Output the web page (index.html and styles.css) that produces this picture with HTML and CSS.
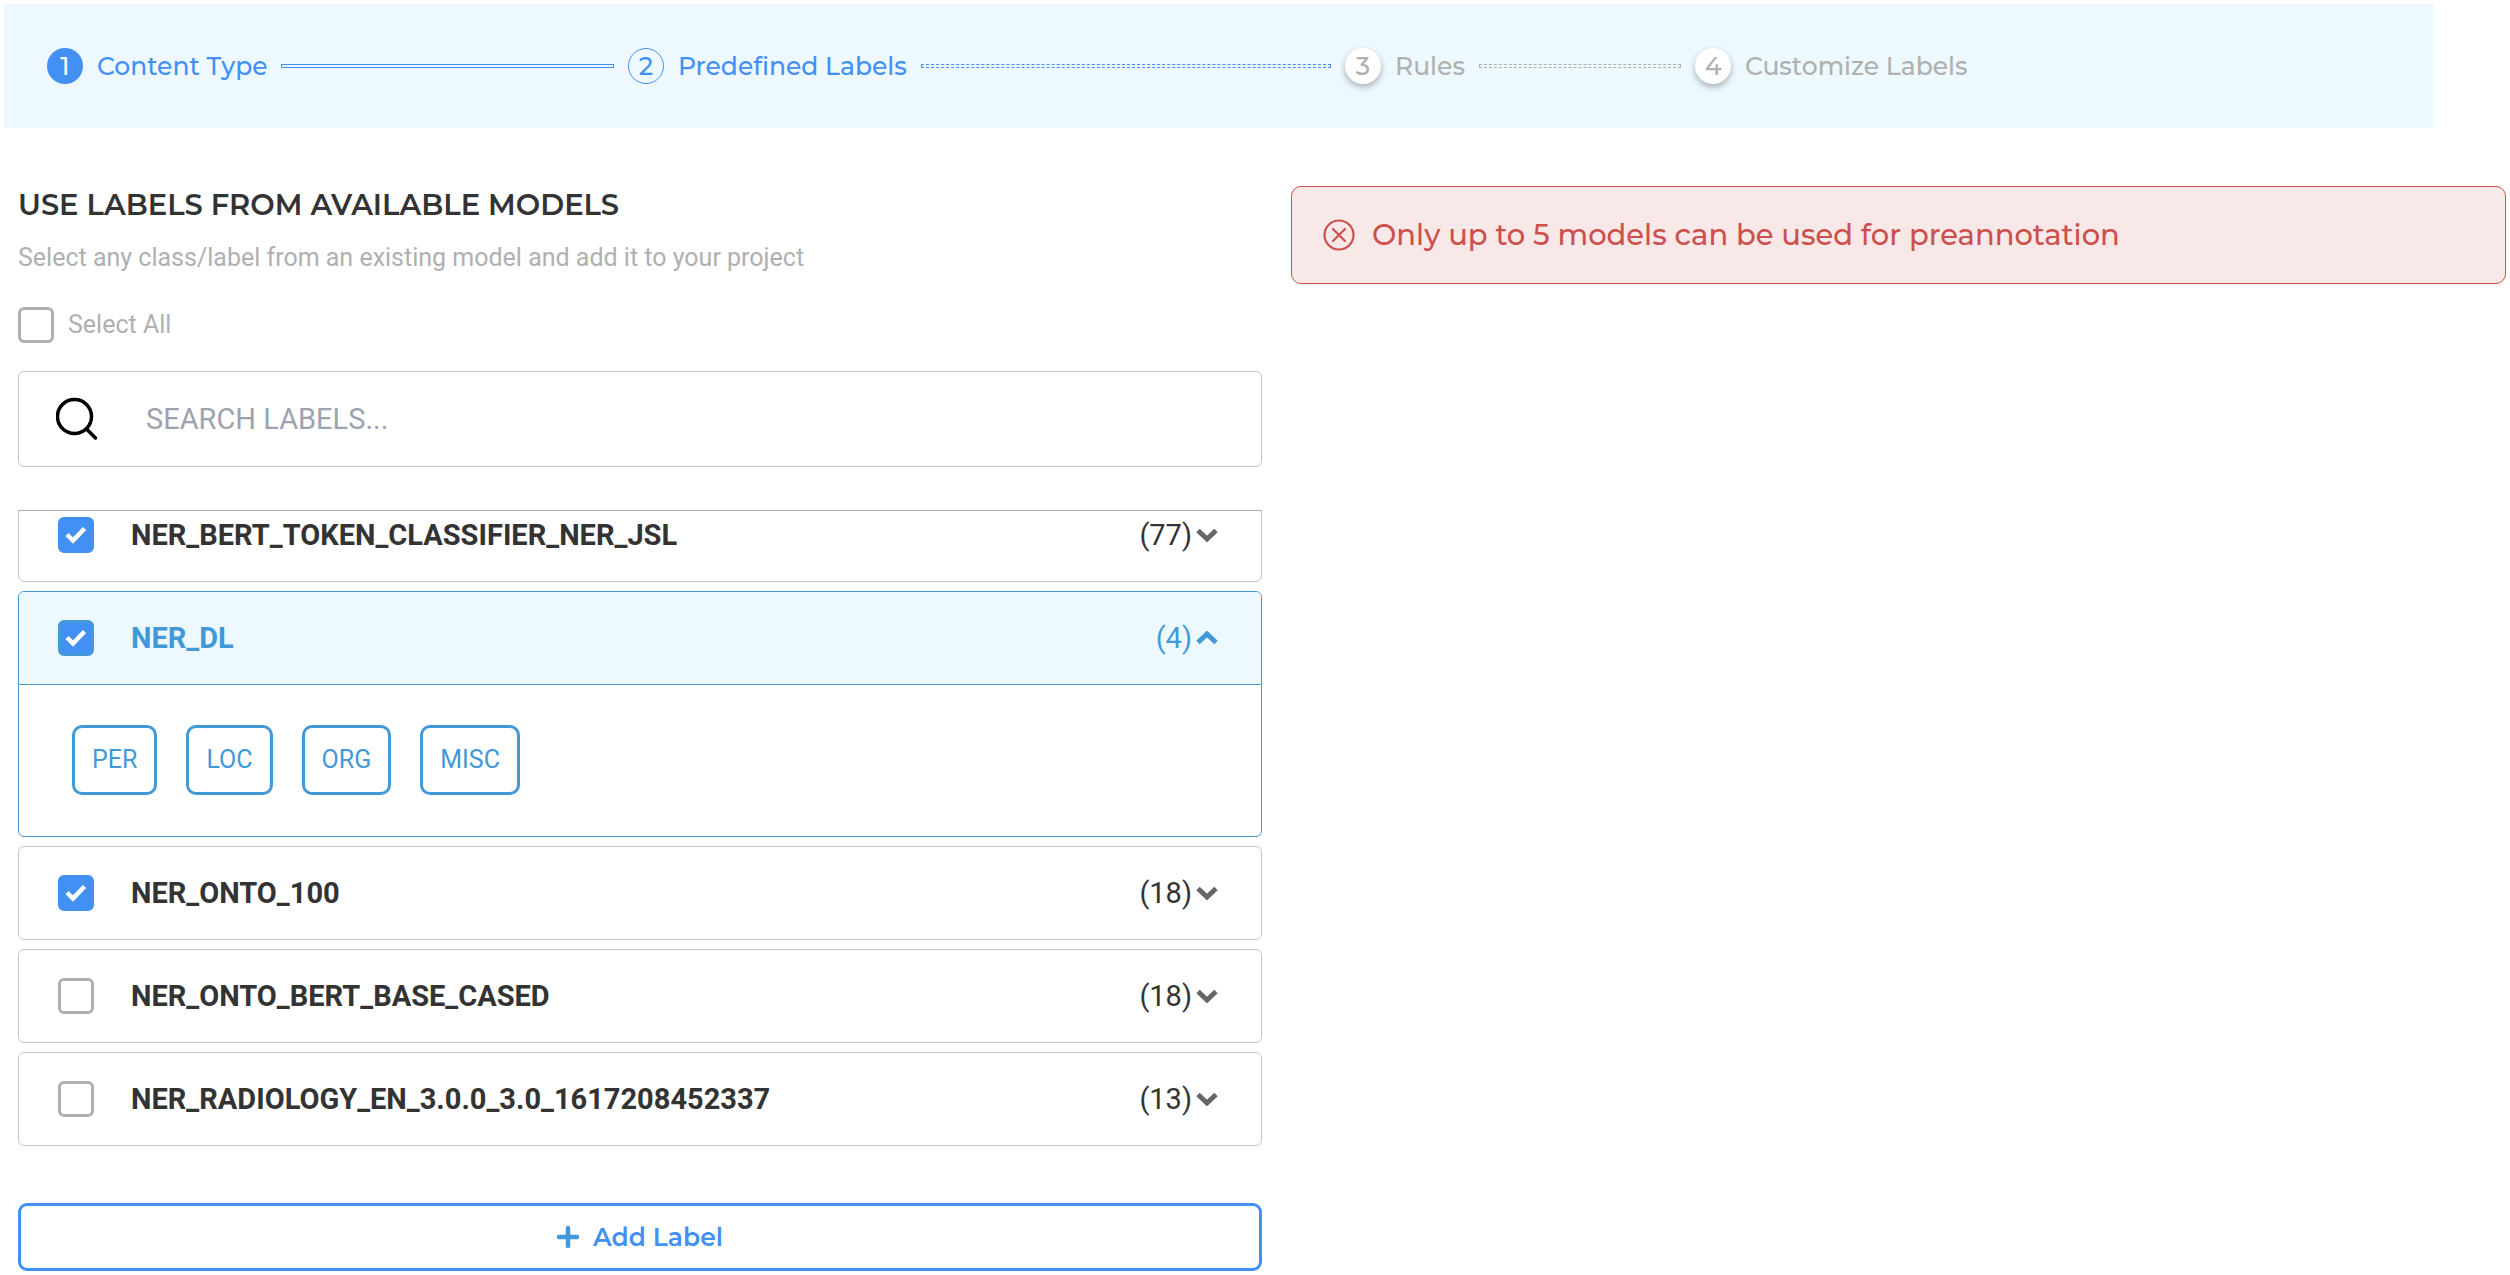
FILE: index.html
```html
<!DOCTYPE html>
<html lang="en">
<head>
<meta charset="utf-8">
<meta name="viewport" content="width=device-width, initial-scale=1">
<title>Predefined Labels</title>
<link rel="stylesheet" href="styles.css">
</head>
<body>
<svg class="sprite" aria-hidden="true">
  <symbol id="chevron" viewBox="0 0 22 14"><path d="M2 2.5 11 11 20 2.5" fill="none" stroke="currentColor" stroke-width="5"/></symbol>
</svg>

<nav aria-label="Setup steps">
  <ol class="steps">
    <li class="step step-done"><span class="step-number">1</span><span class="step-name">Content Type</span><span class="step-line"></span></li>
    <li class="step step-current" aria-current="step"><span class="step-number">2</span><span class="step-name">Predefined Labels</span><span class="step-line"></span></li>
    <li class="step"><span class="step-number">3</span><span class="step-name">Rules</span><span class="step-line"></span></li>
    <li class="step"><span class="step-number">4</span><span class="step-name">Customize Labels</span></li>
  </ol>
</nav>

<main class="content">
  <section class="picker">
    <h1 class="title">USE LABELS FROM AVAILABLE MODELS</h1>
    <p class="hint">Select any class/label from an existing model and add it to your project</p>
    <label class="select-all"><input class="check" type="checkbox">Select All</label>

    <div class="search">
      <svg class="search-icon" viewBox="0 0 42 44" aria-hidden="true"><circle cx="18.500" cy="19.500" r="17" fill="none" stroke="#000" stroke-width="3.500"/><path d="M30.500 32 39.500 41" fill="none" stroke="#000" stroke-width="3.500" stroke-linecap="round"/></svg>
      <input class="search-input" type="text" placeholder="SEARCH LABELS..." aria-label="Search labels">
    </div>

    <div class="models">
      <div class="model">
        <div class="model-head">
          <label class="model-name"><input class="check" type="checkbox" checked>NER_BERT_TOKEN_CLASSIFIER_NER_JSL</label>
          <button class="toggle" type="button">(77)<svg class="chevron" aria-hidden="true"><use href="#chevron"/></svg></button>
        </div>
      </div>
      <div class="model model-open">
        <div class="model-head">
          <label class="model-name"><input class="check" type="checkbox" checked>NER_DL</label>
          <button class="toggle" type="button" aria-expanded="true">(4)<svg class="chevron" aria-hidden="true"><use href="#chevron"/></svg></button>
        </div>
        <div class="chips">
          <button class="chip" type="button">PER</button>
          <button class="chip" type="button">LOC</button>
          <button class="chip" type="button">ORG</button>
          <button class="chip" type="button">MISC</button>
        </div>
      </div>
      <div class="model">
        <div class="model-head">
          <label class="model-name"><input class="check" type="checkbox" checked>NER_ONTO_100</label>
          <button class="toggle" type="button">(18)<svg class="chevron" aria-hidden="true"><use href="#chevron"/></svg></button>
        </div>
      </div>
      <div class="model">
        <div class="model-head">
          <label class="model-name"><input class="check" type="checkbox">NER_ONTO_BERT_BASE_CASED</label>
          <button class="toggle" type="button">(18)<svg class="chevron" aria-hidden="true"><use href="#chevron"/></svg></button>
        </div>
      </div>
      <div class="model">
        <div class="model-head">
          <label class="model-name"><input class="check" type="checkbox">NER_RADIOLOGY_EN_3.0.0_3.0_1617208452337</label>
          <button class="toggle" type="button">(13)<svg class="chevron" aria-hidden="true"><use href="#chevron"/></svg></button>
        </div>
      </div>
    </div>

    <button class="add" type="button">
      <svg class="plus" viewBox="0 0 22 22" aria-hidden="true"><path d="M11 2V20M2 11H20" fill="none" stroke="#4299db" stroke-width="4.500" stroke-linecap="round"/></svg>
      Add Label
    </button>
  </section>

  <aside class="alert" role="alert">
    <svg class="alert-icon" viewBox="0 0 32 32" aria-hidden="true"><g fill="none" stroke="currentColor" stroke-width="2.200"><circle cx="16" cy="16" r="14.500"/><path d="M10 10 22 22M22 10 10 22" stroke-linecap="round"/></g></svg>
    Only up to 5 models can be used for preannotation
  </aside>
</main>
</body>
</html>
```

FILE: styles.css
```css
:root {
  --blue: #4290f3;
  --sky: #4299d8;
  --pale: #edf9ff;
  --gray: #b0b0b0;
  --line: #c4c4c4;
  --ink: #333;
  --red: #cc504d;
  --display: Montserrat, Inter, sans-serif;
}

*, *::before, *::after { box-sizing: border-box; }

body {
  margin: 0;
  padding: 4px 4px 0;
  background: #fff;
  color: var(--ink);
  font: 25px/36px Roboto, sans-serif;
}

button, input { font: inherit; color: inherit; }
button { background: none; border: 0; padding: 0; cursor: pointer; }
.sprite { display: none; }

/* Step bar */
.steps {
  display: grid;
  grid-template-columns: 581fr 717fr 350fr 739fr;
  margin: 0 72px 0 0;
  padding: 44px 0 44px 43px;
  background: var(--pale);
  list-style: none;
}
.step {
  display: flex;
  align-items: center;
  gap: 14px;
  padding-right: 14px;
  color: var(--gray);
  font-family: var(--display);
  font-weight: 500;
  white-space: nowrap;
}
.step-number {
  flex: none;
  width: 36px;
  height: 36px;
  border-radius: 50%;
  background: #fff;
  box-shadow: 0 3px 6px rgba(0, 0, 0, .3);
  text-align: center;
}
.step-line { flex: 1; height: 4px; border: 1px dashed; }
.step-done, .step-current { color: var(--blue); }
.step-done .step-number { background: var(--blue); color: #fff; box-shadow: none; }
.step-done .step-line { border-style: solid; }
.step-current .step-number { background: none; border: 1px solid; line-height: 34px; box-shadow: none; }

/* Two columns */
.content {
  display: grid;
  grid-template-columns: 1244fr 1215fr;
  align-items: start;
  gap: 29px;
  padding: 58px 0 0 14px;
}
.picker { display: flex; flex-direction: column; min-width: 0; }
.title { margin: 0; font: 600 29px/38px var(--display); }
.hint { margin: 16px 0 0; color: var(--gray); }
.select-all {
  display: flex;
  align-items: center;
  align-self: flex-start;
  gap: 14px;
  margin-top: 31px;
  color: var(--gray);
}

.check {
  appearance: none;
  flex: none;
  width: 36px;
  height: 36px;
  margin: 0;
  border: 3px solid var(--gray);
  border-radius: 6px;
  background: #fff;
}
.check:checked {
  border-color: var(--blue);
  background: var(--blue) url("data:image/svg+xml,%3Csvg xmlns='http://www.w3.org/2000/svg' viewBox='0 0 30 30'%3E%3Cpath d='M6 14.500 12 20.500 23.500 8.500' fill='none' stroke='white' stroke-width='4.500'/%3E%3C/svg%3E") center / 30px;
}

.search {
  display: flex;
  align-items: center;
  gap: 48px;
  height: 96px;
  margin-top: 28px;
  padding: 0 37px;
  border: 1px solid var(--line);
  border-radius: 6px;
}
.search-icon { flex: none; width: 42px; height: 44px; }
.search-input {
  flex: 1;
  min-width: 0;
  border: 0;
  padding: 0;
  outline: 0;
  background: none;
  font-size: 29px;
}
.search-input::placeholder { color: #9ca3af; opacity: 1; }

/* Model list, scrolled to its end */
.models {
  display: flex;
  flex-direction: column;
  justify-content: flex-end;
  gap: 9px;
  height: 636px;
  margin-top: 43px;
  overflow: hidden;
  border-top: 1px solid #aaa;
}
.model { flex: none; border: 1px solid var(--line); border-radius: 6px; overflow: hidden; }
.model-head {
  display: flex;
  align-items: center;
  justify-content: space-between;
  height: 92px;
  padding: 0 43px 0 39px;
  font-size: 29px;
}
.model-name { display: flex; align-items: center; gap: 37px; font-weight: 700; }
.toggle { display: flex; align-items: center; gap: 4px; }
.chevron { width: 22px; height: 14px; color: #666; }
.model-open { border-color: var(--sky); color: var(--sky); }
.model-open .model-head { background: var(--pale); }
.model-open .check { border-color: var(--sky); }
.model-open .chevron { color: inherit; transform: rotate(180deg); }
.chips {
  display: flex;
  gap: 29px;
  padding: 40px 53px 41px;
  border-top: 1px solid;
}
.chip { height: 70px; padding: 0 17px; border: 3px solid; border-radius: 10px; }

.add {
  display: flex;
  align-items: center;
  justify-content: center;
  gap: 14px;
  height: 68px;
  margin-top: 57px;
  border: 3px solid var(--blue);
  border-radius: 9px;
  color: var(--blue);
  font-family: var(--display);
  font-weight: 600;
}
.plus { width: 22px; height: 22px; }

.alert {
  display: flex;
  align-items: center;
  gap: 17px;
  min-height: 98px;
  padding: 0 31px;
  border: 1px solid var(--red);
  border-radius: 10px;
  background: #f9e8e8;
  color: var(--red);
  font: 500 29px/36px var(--display);
}
.alert-icon { flex: none; width: 32px; height: 32px; }
```
